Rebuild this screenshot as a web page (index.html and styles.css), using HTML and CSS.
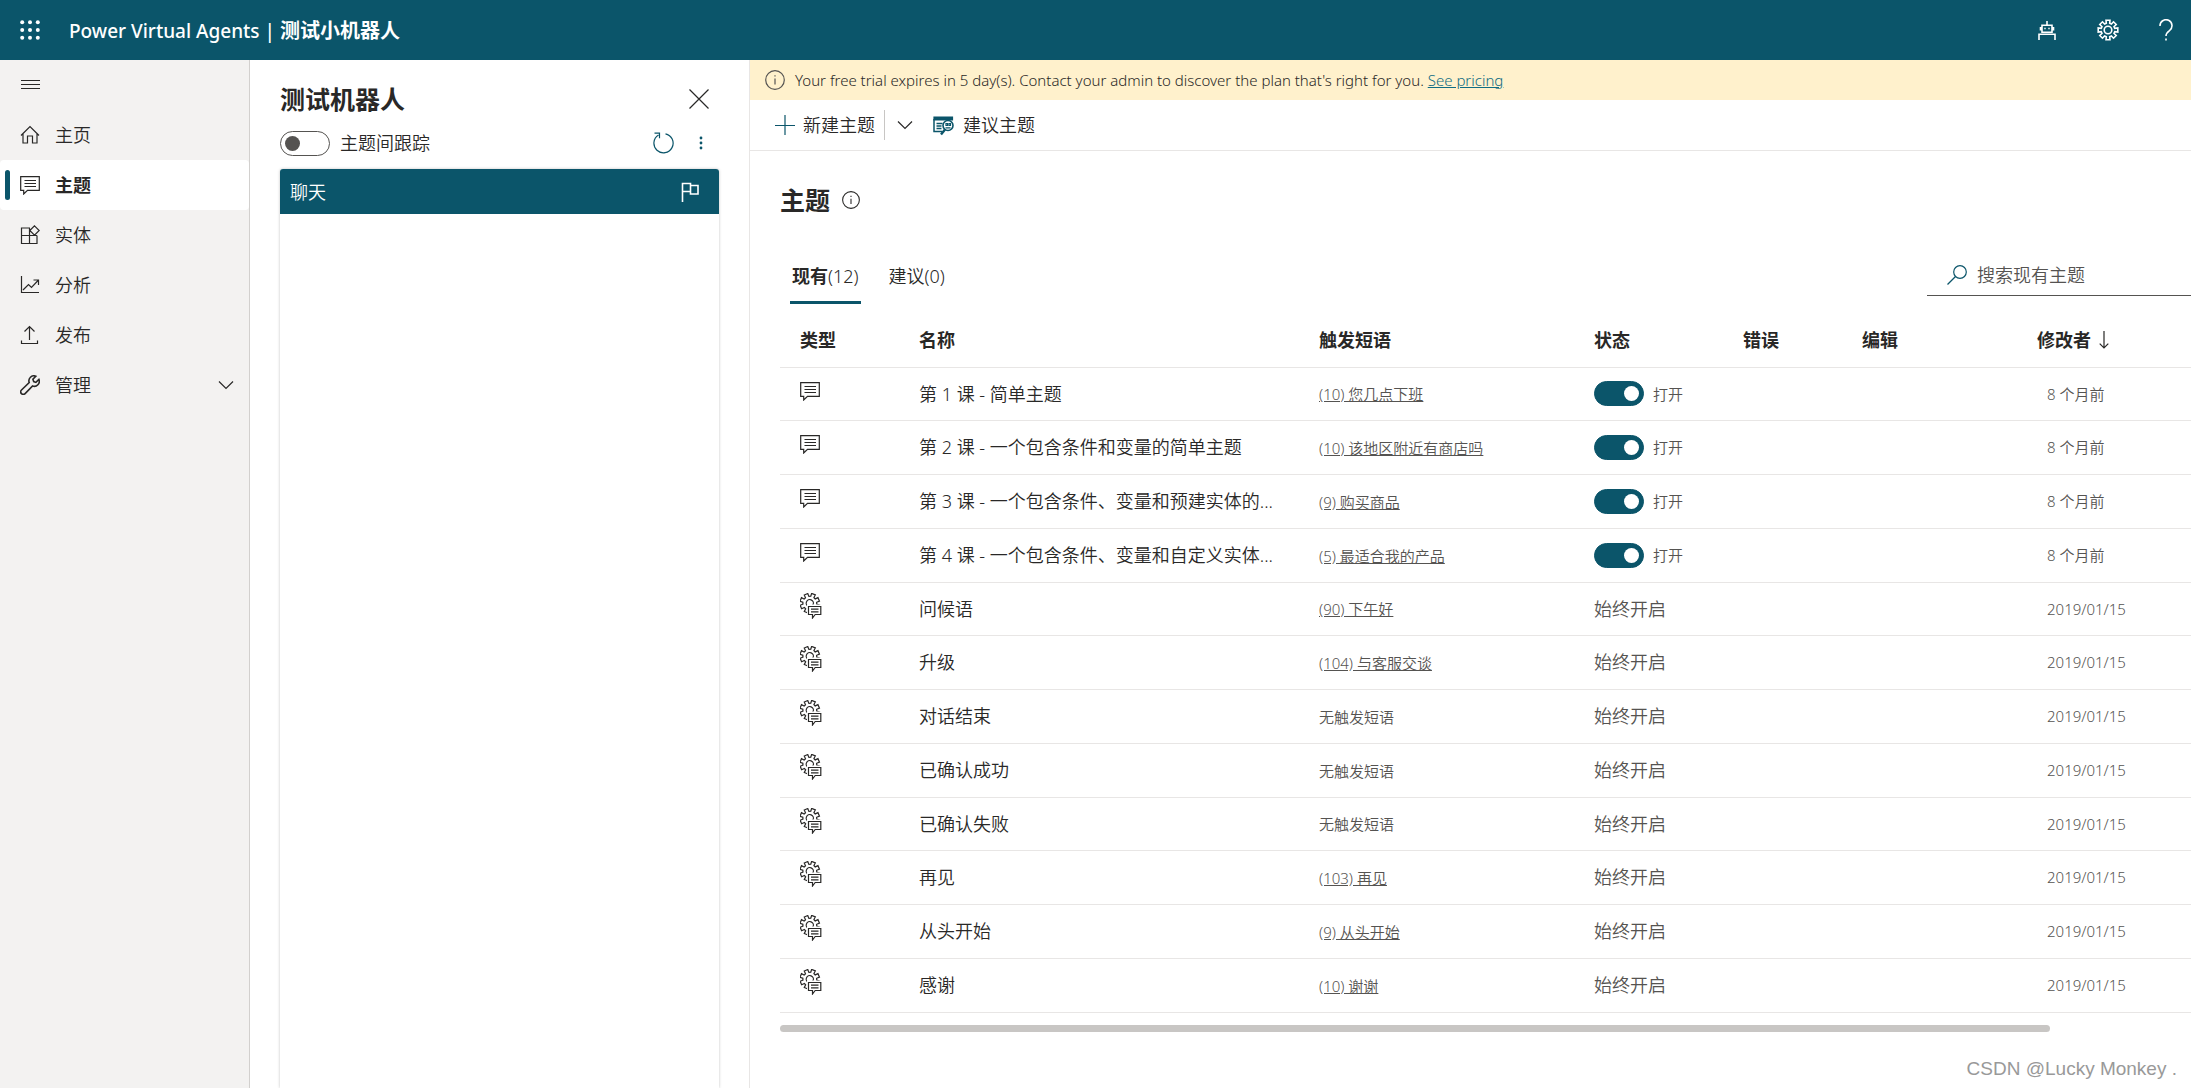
FILE: index.html
```html
<!DOCTYPE html>
<html lang="zh-CN">
<head>
<meta charset="utf-8">
<title>Power Virtual Agents</title>
<meta name="viewport" content="width=device-width, initial-scale=1">
<link rel="stylesheet" href="styles.css">
</head>
<body>
<svg class="sprite" aria-hidden="true">
  <symbol id="i-chat" viewBox="0 0 20 20"><path d="M.7 1.7h18.6v13.6H7.500L3.700 19v-3.700h-3z"/><path d="M4.500 5.500h11.500M4.500 8.500h11.500M4.500 11.500h11.500"/></symbol>
  <symbol id="i-gear" viewBox="0 0 22 22"><path d="M9.300 4.200 9 1.200h4l-.3 3 1.700.8 2.100-2.200 2.700 2.700-2.200 2.100.8 1.700 3-.3v4l-3-.3-.8 1.700 2.200 2.100-2.700 2.700-2.100-2.200-1.700.8.3 3H9l.3-3-1.700-.8-2.100 2.200-2.700-2.700L5 14.400l-.8-1.700-3 .3V9l3 .3L5 7.600 2.800 5.500l2.700-2.700L7.600 5z"/><circle cx="11" cy="11" r="3.800"/></symbol>
  <symbol id="i-gearchat" viewBox="0 0 22 26"><g transform="rotate(22 9.800 10.200) translate(-1.200 -.8)"><path d="M9.300 4.200 9 1.200h4l-.3 3 1.700.8 2.100-2.200 2.700 2.700-2.200 2.100.8 1.700 3-.3v4l-3-.3-.8 1.700 2.200 2.100-2.700 2.700-2.100-2.200-1.700.8.3 3H9l.3-3-1.700-.8-2.100 2.200-2.700-2.700L5 14.400l-.8-1.700-3 .3V9l3 .3L5 7.600 2.800 5.500l2.700-2.700L7.600 5z"/><circle cx="11" cy="11" r="3.600"/></g><path d="M7 11.500h15V26H7z" fill="#fff" stroke="none"/><path d="M8.500 13.500h12.300v8h-5.600L12.500 25v-3.500h-4z"/><path d="M11 16.200h7.500M11 18.800h7.500"/></symbol>
  <symbol id="i-chevron" viewBox="0 0 16 10"><path d="M1 1.500l7 7 7-7"/></symbol>
  <symbol id="i-info" viewBox="0 0 20 20"><circle cx="10" cy="10" r="9.300"/><path d="M10 8.500v6M10 5.200v1.400"/></symbol>
</svg>

<header class="topbar">
  <button class="icon-btn waffle" aria-label="应用启动器"><svg width="20" height="20" viewBox="0 0 20 20" class="solid"><circle cx="2.200" cy="2.200" r="2"/><circle cx="10" cy="2.200" r="2"/><circle cx="17.800" cy="2.200" r="2"/><circle cx="2.200" cy="10" r="2"/><circle cx="10" cy="10" r="2"/><circle cx="17.800" cy="10" r="2"/><circle cx="2.200" cy="17.800" r="2"/><circle cx="10" cy="17.800" r="2"/><circle cx="17.800" cy="17.800" r="2"/></svg></button>
  <div class="brand">Power Virtual Agents | <b>测试小机器人</b></div>
  <div class="topbar-actions">
    <button class="icon-btn" aria-label="机器人"><svg width="20" height="20" viewBox="0 0 20 20" class="bold-line"><path d="M10 1v4M5 5.200h10v7H5zM3.500 7v3.500M16.500 7v3.500M2 20v-5.800h16V20"/><path d="M7.300 8.500h1.400M11.300 8.500h1.400"/></svg></button>
    <button class="icon-btn" aria-label="设置"><svg width="22" height="22" class="bold-line"><use href="#i-gear"/></svg></button>
    <button class="icon-btn" aria-label="帮助"><svg width="14" height="22" viewBox="0 0 14 22" class="bold-line"><path d="M1 7a6 6 0 1 1 9.500 4.600C8 13.400 7 14 7 17M7 19.500v2"/></svg></button>
  </div>
</header>

<div class="app">
  <nav class="sidebar">
    <button class="nav-item" aria-label="折叠菜单"><svg width="20" height="20" viewBox="0 0 20 20"><path d="M1 5.500h19M1 9.500h19M1 13.500h19"/></svg></button>
    <a class="nav-item" href="#"><svg width="20" height="20" viewBox="0 0 20 20"><path d="M1 10.500 10 1.500l9 9M3 8.800V18h4.500v-7h5v7H17V8.800"/></svg>主页</a>
    <a class="nav-item current" href="#" aria-current="page"><svg width="20" height="20"><use href="#i-chat"/></svg>主题</a>
    <a class="nav-item" href="#"><svg width="20" height="20" viewBox="0 0 20 20"><path d="M10 3H1.500v15.500h15.500V10.500M1.500 10.500H17M9.500 3v15.500M14.500.8l4.700 4.700-4.700 4.700-4.700-4.700z"/></svg>实体</a>
    <a class="nav-item" href="#"><svg width="20" height="20" viewBox="0 0 20 20"><path d="M1.500 1v16.500H19M3 15l5.500-5.500 3 3L18.500 5M13.500 5h5v5"/></svg>分析</a>
    <a class="nav-item" href="#"><svg width="20" height="20" viewBox="0 0 20 20"><path d="M9.500 15V1.500M4.500 6.500l5-5 5 5M1.500 15.500v3h16v-3"/></svg>发布</a>
    <a class="nav-item" href="#"><svg width="20" height="20" viewBox="0 0 20 20" class="bold-line"><path d="M15.800 1.200a5 5 0 0 0-6.600 6.300L1.500 15a2.500 2.500 0 0 0 3.600 3.600L12.600 11a5 5 0 0 0 6.300-6.600l-3 3-2.200-.8-.8-2.300z"/></svg>管理<svg class="nav-chevron" width="16" height="10"><use href="#i-chevron"/></svg></a>
  </nav>

  <section class="test-panel">
    <div class="test-head">
      <h2 class="title">测试机器人</h2>
      <button class="icon-btn" aria-label="关闭"><svg width="20" height="20" viewBox="0 0 20 20"><path d="M.5.5l19 19M19.500.5l-19 19"/></svg></button>
    </div>
    <div class="test-tools">
      <label class="track"><input type="checkbox" class="switch">主题间跟踪</label>
      <button class="icon-btn tint" aria-label="重置"><svg width="22" height="22" viewBox="0 0 22 22"><path d="M13.500 1.800A9.600 9.600 0 1 1 6.500 3M2.500 1.200h5v5"/></svg></button>
      <button class="icon-btn tint" aria-label="更多"><svg width="4" height="14" viewBox="0 0 4 14" class="solid"><circle cx="2" cy="2" r="1.400"/><circle cx="2" cy="7" r="1.400"/><circle cx="2" cy="12" r="1.400"/></svg></button>
    </div>
    <div class="chat">
      <div class="chat-head"><span>聊天</span>
        <button class="icon-btn" aria-label="标记"><svg width="18" height="20" viewBox="0 0 18 20" class="bold-line"><path d="M1.500 20V1.500h8v8h-8M9.500 3.500H17v8.500H9.500z"/></svg></button>
      </div>
    </div>
  </section>

  <main class="main">
    <div class="banner"><svg width="20" height="20"><use href="#i-info"/></svg><span>Your free trial expires in 5 day(s). Contact your admin to discover the plan that's right for you. <a href="#">See pricing</a></span></div>
    <div class="toolbar">
      <button class="cmd"><svg class="tint" width="20" height="20" viewBox="0 0 20 20"><path d="M10 0v20M0 10.500h20"/></svg>新建主题</button>
      <button class="cmd split" aria-label="更多新建选项"><svg width="16" height="10"><use href="#i-chevron"/></svg></button>
      <button class="cmd"><svg class="tint" width="22" height="24" viewBox="0 -3 22 24"><path d="M1 1h18.500v3H1z" fill="currentColor"/><path d="M1 3v12.500h8M3.500 7.500h6M3.500 10h5M3.500 12.500h5" stroke-width="1.500"/><circle cx="15" cy="9.500" r="5" stroke-width="1.600"/><path d="M12 13.500l-4 5" stroke-width="2.400"/><path d="M13 7.500h1.500v2H13zM16 7.500h1.500v2H16zM12.500 11.800h5"/></svg>建议主题</button>
    </div>

    <div class="content">
      <h1 class="title">主题<svg width="18" height="18"><use href="#i-info"/></svg></h1>
      <div class="filter">
        <div class="tabs" role="tablist">
          <button class="tab active" role="tab" aria-selected="true"><b>现有</b>(12)</button>
          <button class="tab" role="tab" aria-selected="false">建议(0)</button>
        </div>
        <label class="search"><svg class="tint" width="20" height="20" viewBox="0 0 20 20"><circle cx="13" cy="7" r="6.300"/><path d="M8.500 11.500.5 19.500"/></svg><input type="search" placeholder="搜索现有主题" aria-label="搜索现有主题"></label>
      </div>

      <table class="topics">
        <colgroup><col class="c-type"><col class="c-name"><col class="c-phrase"><col class="c-status"><col class="c-error"><col class="c-edit"><col></colgroup>
        <thead><tr><th>类型</th><th>名称</th><th>触发短语</th><th>状态</th><th>错误</th><th>编辑</th><th><span class="sort">修改者<svg width="10" height="18" viewBox="0 0 10 18"><path d="M5 0v17M.7 12.700 5 17l4.300-4.300"/></svg></span></th></tr></thead>
        <tbody>
          <tr><td><svg width="20" height="20"><use href="#i-chat"/></svg></td><td class="name">第 1 课 - 简单主题</td><td><a class="phrase" href="#">(10) 您几点下班</a></td><td><label class="state"><input type="checkbox" class="switch" checked>打开</label></td><td></td><td></td><td class="when">8 个月前</td></tr>
          <tr><td><svg width="20" height="20"><use href="#i-chat"/></svg></td><td class="name">第 2 课 - 一个包含条件和变量的简单主题</td><td><a class="phrase" href="#">(10) 该地区附近有商店吗</a></td><td><label class="state"><input type="checkbox" class="switch" checked>打开</label></td><td></td><td></td><td class="when">8 个月前</td></tr>
          <tr><td><svg width="20" height="20"><use href="#i-chat"/></svg></td><td class="name">第 3 课 - 一个包含条件、变量和预建实体的...</td><td><a class="phrase" href="#">(9) 购买商品</a></td><td><label class="state"><input type="checkbox" class="switch" checked>打开</label></td><td></td><td></td><td class="when">8 个月前</td></tr>
          <tr><td><svg width="20" height="20"><use href="#i-chat"/></svg></td><td class="name">第 4 课 - 一个包含条件、变量和自定义实体...</td><td><a class="phrase" href="#">(5) 最适合我的产品</a></td><td><label class="state"><input type="checkbox" class="switch" checked>打开</label></td><td></td><td></td><td class="when">8 个月前</td></tr>
          <tr><td><svg width="22" height="26"><use href="#i-gearchat"/></svg></td><td class="name">问候语</td><td><a class="phrase" href="#">(90) 下午好</a></td><td class="always">始终开启</td><td></td><td></td><td class="when">2019/01/15</td></tr>
          <tr><td><svg width="22" height="26"><use href="#i-gearchat"/></svg></td><td class="name">升级</td><td><a class="phrase" href="#">(104) 与客服交谈</a></td><td class="always">始终开启</td><td></td><td></td><td class="when">2019/01/15</td></tr>
          <tr><td><svg width="22" height="26"><use href="#i-gearchat"/></svg></td><td class="name">对话结束</td><td><span class="phrase">无触发短语</span></td><td class="always">始终开启</td><td></td><td></td><td class="when">2019/01/15</td></tr>
          <tr><td><svg width="22" height="26"><use href="#i-gearchat"/></svg></td><td class="name">已确认成功</td><td><span class="phrase">无触发短语</span></td><td class="always">始终开启</td><td></td><td></td><td class="when">2019/01/15</td></tr>
          <tr><td><svg width="22" height="26"><use href="#i-gearchat"/></svg></td><td class="name">已确认失败</td><td><span class="phrase">无触发短语</span></td><td class="always">始终开启</td><td></td><td></td><td class="when">2019/01/15</td></tr>
          <tr><td><svg width="22" height="26"><use href="#i-gearchat"/></svg></td><td class="name">再见</td><td><a class="phrase" href="#">(103) 再见</a></td><td class="always">始终开启</td><td></td><td></td><td class="when">2019/01/15</td></tr>
          <tr><td><svg width="22" height="26"><use href="#i-gearchat"/></svg></td><td class="name">从头开始</td><td><a class="phrase" href="#">(9) 从头开始</a></td><td class="always">始终开启</td><td></td><td></td><td class="when">2019/01/15</td></tr>
          <tr><td><svg width="22" height="26"><use href="#i-gearchat"/></svg></td><td class="name">感谢</td><td><a class="phrase" href="#">(10) 谢谢</a></td><td class="always">始终开启</td><td></td><td></td><td class="when">2019/01/15</td></tr>
        </tbody>
      </table>
      <div class="scrollbar"><div class="thumb"></div></div>
    </div>
  </main>
</div>
<div class="watermark">CSDN @Lucky Monkey .</div>
</body>
</html>
```
FILE: styles.css
```css
:root {
  --teal: #0b556a;
  --text: #292827;
  --muted: #555351;
  --line: #e8e6e5;
}

* { box-sizing: border-box; }

body {
  display: flex;
  flex-direction: column;
  min-height: 100vh;
  margin: 0;
  color: var(--text);
  background: #fff;
  font: 350 18px/24px "Noto Sans", "Noto Sans CJK SC", sans-serif;
}

svg {
  flex: none;
  display: block;
  fill: none;
  stroke: currentColor;
  stroke-width: 1.2;
}

.sprite { display: none; }
.solid { fill: currentColor; stroke: none; }
.bold-line { stroke-width: 1.6; }
.tint { color: var(--teal); }

b { font-weight: 700; }

button {
  padding: 0;
  border: 0;
  background: none;
  color: inherit;
  font: inherit;
}

a { color: inherit; }

.icon-btn { display: flex; align-items: center; justify-content: center; }
.icon-btn.tint { color: var(--teal); }

.title {
  margin: 0;
  font-size: 25px;
  line-height: 34px;
  font-weight: 700;
}

/* Top bar */
.topbar {
  display: flex;
  align-items: center;
  height: 60px;
  padding: 0 18px 0 20px;
  background: var(--teal);
  color: #fff;
}
.brand { margin-left: 29px; padding-top: 2px; font-size: 19px; font-weight: 500; }
.brand b { font-size: 20px; }
.topbar-actions { display: flex; gap: 40px; margin-left: auto; }

/* Side navigation */
.app { display: flex; flex: 1; }
.sidebar {
  flex: none;
  width: 250px;
  border-right: 1px solid #d2d0ce;
  background: #f3f2f1;
}
.nav-item {
  position: relative;
  display: flex;
  align-items: center;
  gap: 15px;
  width: 100%;
  height: 50px;
  padding: 0 15px 0 20px;
  line-height: 26px;
  text-decoration: none;
}
.nav-item.current { border-radius: 4px; background: #fff; font-weight: 700; }
.nav-item.current::before {
  content: "";
  position: absolute;
  left: 5px;
  top: 10px;
  width: 5px;
  height: 30px;
  border-radius: 3px;
  background: var(--teal);
}
.nav-chevron { margin-left: auto; }

/* Switches */
.switch {
  appearance: none;
  flex: none;
  display: flex;
  align-items: center;
  width: 50px;
  height: 25px;
  margin: 0;
  padding: 0 4px;
  border: 1px solid var(--muted);
  border-radius: 13px;
}
.switch::before {
  content: "";
  width: 15px;
  height: 15px;
  border-radius: 50%;
  background: var(--muted);
}
.switch:checked { justify-content: flex-end; border-color: var(--teal); background: var(--teal); }
.switch:checked::before { background: #fff; }

/* Test panel */
.test-panel {
  flex: none;
  display: flex;
  flex-direction: column;
  width: 500px;
  padding: 22px 30px 0;
  border-right: 1px solid var(--line);
}
.test-head { display: flex; justify-content: space-between; padding-right: 10px; }
.test-tools { display: flex; align-items: center; gap: 25px; height: 53px; padding: 1px 16px 0 0; }
.track { display: flex; align-items: center; gap: 10px; margin-right: auto; }
.chat {
  flex: 1;
  border-radius: 3px 3px 0 0;
  box-shadow: 0 0 3px rgba(0, 0, 0, .25);
}
.chat-head {
  display: flex;
  align-items: center;
  justify-content: space-between;
  height: 45px;
  padding: 0 20px 0 10px;
  border-radius: 3px 3px 0 0;
  background: var(--teal);
  color: #fff;
}

/* Main column */
.main { flex: 1; min-width: 0; }
.banner {
  display: flex;
  align-items: center;
  gap: 10px;
  height: 40px;
  padding-left: 15px;
  background: #fff1cc;
  font-size: 15px;
  font-weight: 300;
}
.banner svg { color: var(--muted); }
.banner a { color: #0f6c83; }
.toolbar {
  display: flex;
  align-items: center;
  height: 51px;
  padding-left: 25px;
  border-bottom: 1px solid var(--line);
}
.cmd { display: flex; align-items: center; gap: 8px; }
.cmd.split { height: 30px; margin: 0 20px 0 9px; padding-left: 12px; border-left: 1px solid #c8c6c4; }

.content { padding-left: 30px; }
.content .title { display: flex; align-items: center; gap: 12px; padding-top: 32px; }
.filter { display: flex; align-items: flex-end; justify-content: space-between; margin-top: 34px; }
.tabs { display: flex; gap: 18px; padding-left: 10px; }
.tab { height: 53px; padding: 0 2px 3px; }
.tab + .tab { padding: 0 10px 3px; }
.tab.active { border-bottom: 3px solid var(--teal); padding-bottom: 0; }
.search {
  display: flex;
  align-items: center;
  gap: 10px;
  width: 264px;
  height: 42px;
  margin-bottom: 8px;
  padding-left: 20px;
  border-bottom: 1px solid var(--muted);
}
.search input { min-width: 0; flex: 1; padding: 0; border: 0; outline: 0; background: none; font: inherit; }
.search input::placeholder { color: var(--muted); opacity: 1; }

/* Topics table */
.topics { width: 100%; table-layout: fixed; border-collapse: collapse; }
.c-type { width: 119px; }
.c-name { width: 400px; }
.c-phrase { width: 275px; }
.c-status { width: 149px; }
.c-error { width: 119px; }
.c-edit { width: 175px; }
.topics th, .topics td {
  padding: 0 0 0 20px;
  border-bottom: 1px solid var(--line);
  text-align: left;
  white-space: nowrap;
}
.topics th { height: 63px; padding-top: 10px; font-weight: 700; }
.topics td { height: 54px; }
.topics tr:nth-child(4n + 1) td { height: 53px; }
.topics td:first-child { padding-bottom: 6px; }
.topics .when { padding-left: 30px; color: var(--muted); font-size: 15px; }
.topics .always { color: var(--muted); }
.phrase { color: var(--muted); font-size: 15px; }
.state { display: flex; align-items: center; gap: 9px; color: var(--muted); font-size: 15px; }
.sort { display: flex; align-items: center; gap: 8px; }

.scrollbar { height: 7px; margin: 12px 0; }
.thumb { width: 90%; height: 7px; border-radius: 4px; background: #c8c6c4; }

.watermark {
  position: absolute;
  right: 14px;
  bottom: 7px;
  color: #999;
  font: 19px/24px "Liberation Sans", sans-serif;
}
```
